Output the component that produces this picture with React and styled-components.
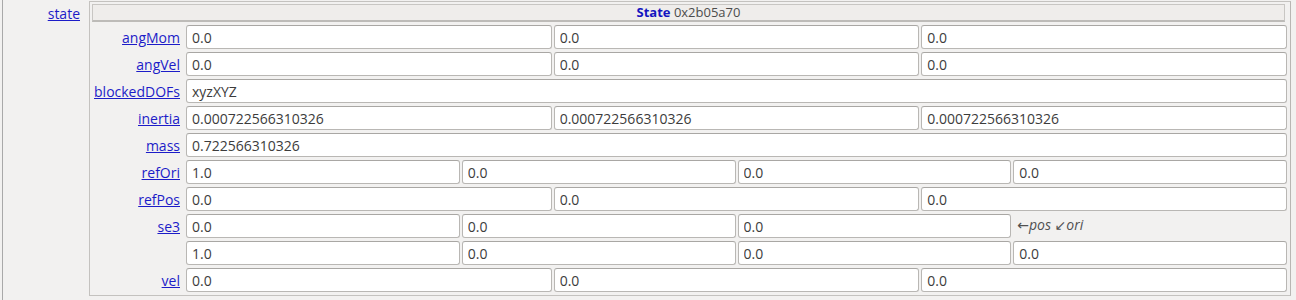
import styled, { createGlobalStyle } from 'styled-components'

const GlobalStyle = createGlobalStyle`
    body {
        margin: 0;
        background: #f2f1f0;
        font-family: "Open Sans", "Noto Sans", "DejaVu Sans", sans-serif;
        font-size: 14px;
    }
`

const rows = [
    { name: 'angMom', values: ['0.0', '0.0', '0.0'] },
    { name: 'angVel', values: ['0.0', '0.0', '0.0'] },
    { name: 'blockedDOFs', values: ['xyzXYZ'] },
    { name: 'inertia', values: ['0.000722566310326', '0.000722566310326', '0.000722566310326'] },
    { name: 'mass', values: ['0.722566310326'] },
    { name: 'refOri', values: ['1.0', '0.0', '0.0', '0.0'] },
    { name: 'refPos', values: ['0.0', '0.0', '0.0'] },
    { name: 'se3', values: ['0.0', '0.0', '0.0'], note: '←pos ↙ori' },
    { name: '', values: ['1.0', '0.0', '0.0', '0.0'] },
    { name: 'vel', values: ['0.0', '0.0', '0.0'] },
]

function App() {
    return <Frame>
        <GlobalStyle />
        <OuterLabel><Link href="#">state</Link></OuterLabel>
        <Panel>
            <TitleBar>
                <TitleName>State</TitleName> 0x2b05a70
            </TitleBar>
            {rows.map((row, i) => (
                <Row key={i}>
                    <Label>{row.name && <Link href="#">{row.name}</Link>}</Label>
                    <Fields $cols={row.note ? 4 : row.values.length}>
                        {row.values.map((v, j) => <Field key={j} readOnly value={v} />)}
                        {row.note && <Note>{row.note}</Note>}
                    </Fields>
                </Row>
            ))}
        </Panel>
    </Frame>
}

export default App

const Frame = styled.div`
    display: flex;
    align-items: flex-start;
    height: 300px;
    box-sizing: border-box;
    margin-left: 2px;
    border-left: 1px solid #a9a9a9;
`
const OuterLabel = styled.div`
    width: 77px;
    text-align: right;
    padding-top: 5px;
    line-height: 18px;
`
const Link = styled.a`
    color: #1c1cc8;
    text-decoration: underline;
`
const Panel = styled.div`
    margin-left: 9px;
    margin-top: 1px;
    width: 1202px;
    height: 295px;
    box-sizing: border-box;
    border: 1px solid #c4c2bf;
    border-right-color: #b8b6b3;
    padding: 2px 3px 0 2px;
    display: flex;
    flex-direction: column;
    gap: 3px;
`
const TitleBar = styled.div`
    height: 18px;
    box-sizing: border-box;
    background: #efedeb;
    border: 1px solid #c8c6c3;
    border-bottom: 2px solid #bdbbb8;
    margin-right: 2px;
    text-align: center;
    line-height: 15px;
    font-size: 13px;
    color: #4c4c4c;
`
const TitleName = styled.span`
    color: #1414c0;
    font-weight: bold;
`
const Row = styled.div`
    display: flex;
    align-items: center;
    height: 24px;
`
const Label = styled.div`
    width: 94px;
    flex: none;
    text-align: right;
    padding-right: 6px;
    box-sizing: border-box;
`
const Fields = styled.div`
    flex: 1;
    display: grid;
    grid-template-columns: repeat(${p => p.$cols}, 1fr);
    gap: 2px;
    height: 100%;
`
const Field = styled.input`
    min-width: 0;
    height: 24px;
    box-sizing: border-box;
    border: 1px solid #b9b7b4;
    border-top-color: #a9a7a4;
    border-radius: 3px;
    background: #fff;
    padding: 0 5px;
    font: inherit;
    color: #3c3c3c;
    outline: none;
`
const Note = styled.div`
    font-style: italic;
    color: #505050;
    padding-left: 4px;
    line-height: 22px;
`
